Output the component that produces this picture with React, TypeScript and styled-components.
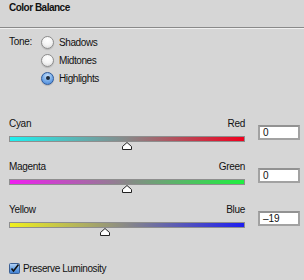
import styled, { createGlobalStyle } from "styled-components";

const GlobalStyle = createGlobalStyle`
  html, body {
    margin: 0;
    padding: 0;
    background: #d6d6d6;
  }
  body {
    font-family: "Liberation Sans", Arial, sans-serif;
    font-size: 10px;
    color: #111;
  }
`;

const Panel = styled.div`
  width: 304px;
  height: 280px;
  overflow: hidden;
  background: #d6d6d6;
  display: flex;
  flex-direction: column;
`;

const Header = styled.div`
  height: 28px;
  box-sizing: border-box;
  padding: 1px 9px 0;
  border-bottom: 1px solid #8a8a8a;
`;

const Title = styled.span`
  font-weight: bold;
  font-size: 10px;
  line-height: 13px;
  letter-spacing: -0.5px;
`;

const Divider = styled.div`
  height: 1px;
  background: #f0f0f0;
`;

const ToneSection = styled.div`
  display: flex;
  padding: 4px 9px 0;
  height: 82px;
  box-sizing: border-box;
`;

const ToneLabel = styled.span`
  width: 32px;
  line-height: 18px;
  letter-spacing: -0.3px;
`;

const RadioList = styled.div`
  display: flex;
  flex-direction: column;
`;

const RadioRow = styled.label`
  display: flex;
  align-items: center;
  height: 18px;
  gap: 5px;
  letter-spacing: -0.4px;
`;

const RadioDot = styled.span<{ $checked?: boolean }>`
  width: 13px;
  height: 13px;
  box-sizing: border-box;
  border-radius: 50%;
  border: 1px solid ${(p) => (p.$checked ? "#2f5a9a" : "#8c8c8c")};
  background: ${(p) =>
    p.$checked
      ? "radial-gradient(circle at 50% 30%, #cfe4fb 0%, #7fb1ea 45%, #3d7fd6 100%)"
      : "radial-gradient(circle at 50% 30%, #ffffff 0%, #f4f4f4 50%, #d2d2d2 100%)"};
  box-shadow: 0 1px 1px rgba(0, 0, 0, 0.15);
  display: flex;
  align-items: center;
  justify-content: center;
  &::after {
    content: "";
    display: ${(p) => (p.$checked ? "block" : "none")};
    width: 4px;
    height: 4px;
    border-radius: 50%;
    background: #1c2a3c;
  }
`;

const Sliders = styled.div`
  display: flex;
  flex-direction: column;
  padding: 6px 0 0 9px;
`;

const SliderRow = styled.div`
  display: flex;
  height: 43px;
`;

const SliderCol = styled.div`
  width: 236px;
  display: flex;
  flex-direction: column;
`;

const Ends = styled.div`
  display: flex;
  justify-content: space-between;
  height: 13px;
  line-height: 13px;
  margin-bottom: 6px;
  letter-spacing: -0.3px;
`;

const Track = styled.div<{ $from: string; $to: string }>`
  position: relative;
  height: 6px;
  box-sizing: border-box;
  border: 1px solid #8e8e8e;
  background: linear-gradient(
    to right,
    ${(p) => p.$from} 0%,
    #888888 50%,
    ${(p) => p.$to} 100%
  );
`;

const Thumb = styled.svg`
  position: absolute;
  top: 5px;
  width: 10px;
  height: 8px;
  margin-left: -5px;
`;

const ValueBox = styled.div`
  margin: 8px 0 0 13px;
  width: 42px;
  height: 15px;
  box-sizing: border-box;
  border: 2px solid #a2a2a2;
  border-top-color: #929292;
  background: #fff;
  padding-left: 3px;
  line-height: 11px;
  font-size: 10px;
`;

const CheckRow = styled.label`
  display: flex;
  align-items: center;
  gap: 3px;
  padding: 17px 0 0 9px;
  letter-spacing: -0.4px;
`;

const CheckBox = styled.svg`
  width: 11px;
  height: 11px;
`;

const sliders = [
  { left: "Cyan", right: "Red", from: "#1ef0f0", to: "#f0001e", value: 0 },
  { left: "Magenta", right: "Green", from: "#f01ef0", to: "#1ef040", value: 0 },
  { left: "Yellow", right: "Blue", from: "#f0f01e", to: "#1e1ef0", value: -19 },
];

const tones = ["Shadows", "Midtones", "Highlights"];

export default function App() {
  return (
    <Panel>
      <GlobalStyle />
      <Header>
        <Title>Color Balance</Title>
      </Header>
      <Divider />
      <ToneSection>
        <ToneLabel>Tone:</ToneLabel>
        <RadioList>
          {tones.map((t) => (
            <RadioRow key={t}>
              <RadioDot $checked={t === "Highlights"} />
              {t}
            </RadioRow>
          ))}
        </RadioList>
      </ToneSection>
      <Sliders>
        {sliders.map((s) => (
          <SliderRow key={s.left}>
            <SliderCol>
              <Ends>
                <span>{s.left}</span>
                <span>{s.right}</span>
              </Ends>
              <Track $from={s.from} $to={s.to}>
                <Thumb
                  viewBox="0 0 10 8"
                  style={{ left: `${((s.value + 100) / 200) * 100}%` }}
                >
                  <path
                    d="M5 0.5 L9.5 4.5 L9.5 7.5 L0.5 7.5 L0.5 4.5 Z"
                    fill="#fff"
                    stroke="#222"
                    strokeWidth="1"
                  />
                </Thumb>
              </Track>
            </SliderCol>
            <ValueBox>{s.value === 0 ? "0" : `–${Math.abs(s.value)}`}</ValueBox>
          </SliderRow>
        ))}
      </Sliders>
      <CheckRow>
        <CheckBox viewBox="0 0 11 11">
          <defs>
            <linearGradient id="cb" x1="0" y1="0" x2="0" y2="1">
              <stop offset="0" stopColor="#b9d6f7" />
              <stop offset="0.5" stopColor="#6ea6e6" />
              <stop offset="1" stopColor="#3f7fd2" />
            </linearGradient>
          </defs>
          <rect x="0.5" y="0.5" width="10" height="10" rx="1" fill="url(#cb)" stroke="#3a5f94" />
          <path d="M2.5 5.5 L4.5 8 L9.5 1.5" fill="none" stroke="#111" strokeWidth="1.6" />
        </CheckBox>
        Preserve Luminosity
      </CheckRow>
    </Panel>
  );
}
